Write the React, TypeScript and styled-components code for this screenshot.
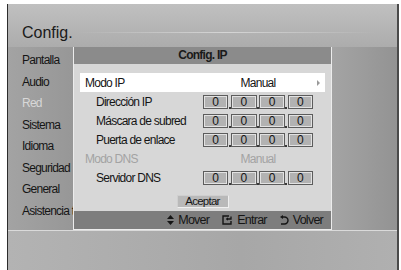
import React from "react";
import styled, { createGlobalStyle } from "styled-components";

const GlobalStyle = createGlobalStyle`
  html, body {
    margin: 0;
    padding: 0;
    background: #ffffff;
  }
  body {
    font-family: "Liberation Sans Narrow", "Liberation Sans", Arial, sans-serif;
    letter-spacing: -0.75px;
    color: #151515;
  }
`;

const Screen = styled.div`
  margin: 4px 0 0 7px;
  width: 389px;
  height: 266px;
  display: flex;
  flex-direction: column;
  border-left: 1px solid #2c2c2c;
  border-right: 2px solid #4a4a4a;
  background: #a9a9a9;
`;

const Header = styled.header`
  position: relative;
  height: 43px;
  box-sizing: border-box;
  padding: 20px 0 0 14px;
  background: linear-gradient(#c0c0c0, #acacac);
  font-family: "Liberation Sans", Arial, sans-serif;
  font-size: 16px;
  line-height: 18px;
  letter-spacing: 0;
  color: #1a1a1a;

  &::after {
    content: "";
    position: absolute;
    left: 68px;
    right: 20px;
    top: 28px;
    height: 1px;
    background: linear-gradient(90deg, rgba(255, 255, 255, 0), rgba(255, 255, 255, 0.45) 50%, rgba(255, 255, 255, 0));
  }
`;

const Middle = styled.div`
  display: flex;
  height: 183px;
`;

const Sidebar = styled.ul`
  list-style: none;
  margin: 0;
  padding: 3px 0 0 14px;
  width: 65px;
  box-sizing: border-box;
  background: linear-gradient(90deg, #a3a3a3, #979797);
  overflow: hidden;
  white-space: nowrap;
`;

const SideItem = styled.li<{ $active?: boolean }>`
  height: 21.5px;
  line-height: 21.5px;
  font-size: 12px;
  color: ${({ $active }) => ($active ? "#d8d8d8" : "#151515")};
`;

const Dialog = styled.section`
  width: 259px;
  box-sizing: border-box;
  display: flex;
  flex-direction: column;
  border: 1px solid #ececec;
  border-top: none;
  background: #d7d7d7;
`;

const TitleBar = styled.div`
  height: 17px;
  line-height: 17px;
  text-align: center;
  background: #8b8b8b;
  font-size: 12px;
  font-weight: bold;
  color: #1a1a1a;
`;

const Body = styled.div`
  flex: 1;
  padding: 9px 6px 0 6px;
  display: flex;
  flex-direction: column;
`;

const Row = styled.div<{ $selected?: boolean }>`
  display: grid;
  grid-template-columns: 123px 110px 12px;
  align-items: center;
  height: 19px;
  background: ${({ $selected }) => ($selected ? "#ffffff" : "transparent")};
  font-size: 12px;
`;

const Label = styled.span<{ $indent?: boolean; $dim?: boolean }>`
  padding-left: ${({ $indent }) => ($indent ? "16px" : "5px")};
  color: ${({ $dim }) => ($dim ? "#a3a3a3" : "#151515")};
`;

const Value = styled.span<{ $dim?: boolean }>`
  text-align: center;
  color: ${({ $dim }) => ($dim ? "#a3a3a3" : "#151515")};
`;

const Arrow = styled.span`
  width: 0;
  height: 0;
  margin-left: 4px;
  border-top: 3px solid transparent;
  border-bottom: 3px solid transparent;
  border-left: 3px solid #9a9a9a;
`;

const Octets = styled.div`
  display: flex;
  align-items: flex-end;
  height: 14px;
`;

const Box = styled.span`
  width: 26px;
  height: 14px;
  box-sizing: border-box;
  border: 1px solid #5c5c5c;
  box-shadow: inset 0 0 0 1px #e2e2e2;
  background: #b2b2b2;
  text-align: center;
  line-height: 12px;
  font-size: 12px;
  letter-spacing: 0;
  color: #151515;
`;

const Dot = styled.span`
  width: 2px;
  height: 2px;
  margin: 0 0.5px 0 0.5px;
  background: #3a3a3a;
`;

const AcceptButton = styled.div`
  align-self: center;
  margin-top: 8px;
  width: 52px;
  height: 13px;
  box-sizing: border-box;
  border: 1px solid #efefef;
  border-top-color: #cfcfcf;
  border-left-color: #cfcfcf;
  background: #b9b9b9;
  font-size: 11.5px;
  line-height: 11px;
  text-align: center;
  color: #151515;
`;

const HelpBar = styled.div`
  margin-top: auto;
  height: 18px;
  display: flex;
  justify-content: flex-end;
  align-items: center;
  gap: 13px;
  padding-right: 8px;
  background: #7d7d7d;
  font-size: 12.5px;
  color: #151515;
`;

const HelpItem = styled.span`
  display: flex;
  align-items: center;
  gap: 4px;
`;

const RightFill = styled.div`
  flex: 1;
  background: linear-gradient(90deg, #a4a4a4, #939393);
`;

const Footer = styled.footer`
  flex: 1;
  border-top: 1px solid #dadada;
  background: linear-gradient(90deg, #b3b3b3, #a7a7a7 60%, #b0b0b0);
`;

const MoveIcon = () => (
  <svg width="7" height="10" viewBox="0 0 7 10">
    <path d="M3.5 0 L7 4 L0 4 Z M0 6 L7 6 L3.5 10 Z" fill="#151515" />
  </svg>
);

const EnterIcon = () => (
  <svg width="11" height="10" viewBox="0 0 11 10">
    <path d="M7 1 H1 V9 H9 V6" fill="none" stroke="#151515" strokeWidth="1.4" />
    <path d="M9 1.5 V4 H4.5" fill="none" stroke="#151515" strokeWidth="1.3" />
    <path d="M4 4 L6 2.2 V5.8 Z" fill="#151515" />
  </svg>
);

const ReturnIcon = () => (
  <svg width="9" height="10" viewBox="0 0 9 10">
    <path d="M2 2 H4.5 A3.5 3.5 0 0 1 4.5 9 H1" fill="none" stroke="#151515" strokeWidth="1.4" />
    <path d="M0 2 L3 0 V4 Z" fill="#151515" />
  </svg>
);

const sideItems = ["Pantalla", "Audio", "Red", "Sistema", "Idioma", "Seguridad", "General", "Asistencia técnica"];

const ipRows = [
  { label: "Dirección IP" },
  { label: "Máscara de subred" },
  { label: "Puerta de enlace" },
];

const IpBoxes = () => (
  <Octets>
    {[0, 1, 2, 3].map((i) => (
      <React.Fragment key={i}>
        {i > 0 && <Dot />}
        <Box>0</Box>
      </React.Fragment>
    ))}
  </Octets>
);

export default function App() {
  return (
    <>
      <GlobalStyle />
      <Screen>
        <Header>Config.</Header>
        <Middle>
          <Sidebar>
            {sideItems.map((item) => (
              <SideItem key={item} $active={item === "Red"}>
                {item}
              </SideItem>
            ))}
          </Sidebar>
          <Dialog>
            <TitleBar>Config. IP</TitleBar>
            <Body>
              <Row $selected>
                <Label>Modo IP</Label>
                <Value>Manual</Value>
                <Arrow />
              </Row>
              {ipRows.map((row) => (
                <Row key={row.label}>
                  <Label $indent>{row.label}</Label>
                  <IpBoxes />
                </Row>
              ))}
              <Row>
                <Label $dim>Modo DNS</Label>
                <Value $dim>Manual</Value>
              </Row>
              <Row>
                <Label $indent>Servidor DNS</Label>
                <IpBoxes />
              </Row>
              <AcceptButton>Aceptar</AcceptButton>
            </Body>
            <HelpBar>
              <HelpItem>
                <MoveIcon />
                Mover
              </HelpItem>
              <HelpItem>
                <EnterIcon />
                Entrar
              </HelpItem>
              <HelpItem>
                <ReturnIcon />
                Volver
              </HelpItem>
            </HelpBar>
          </Dialog>
          <RightFill />
        </Middle>
        <Footer />
      </Screen>
    </>
  );
}
